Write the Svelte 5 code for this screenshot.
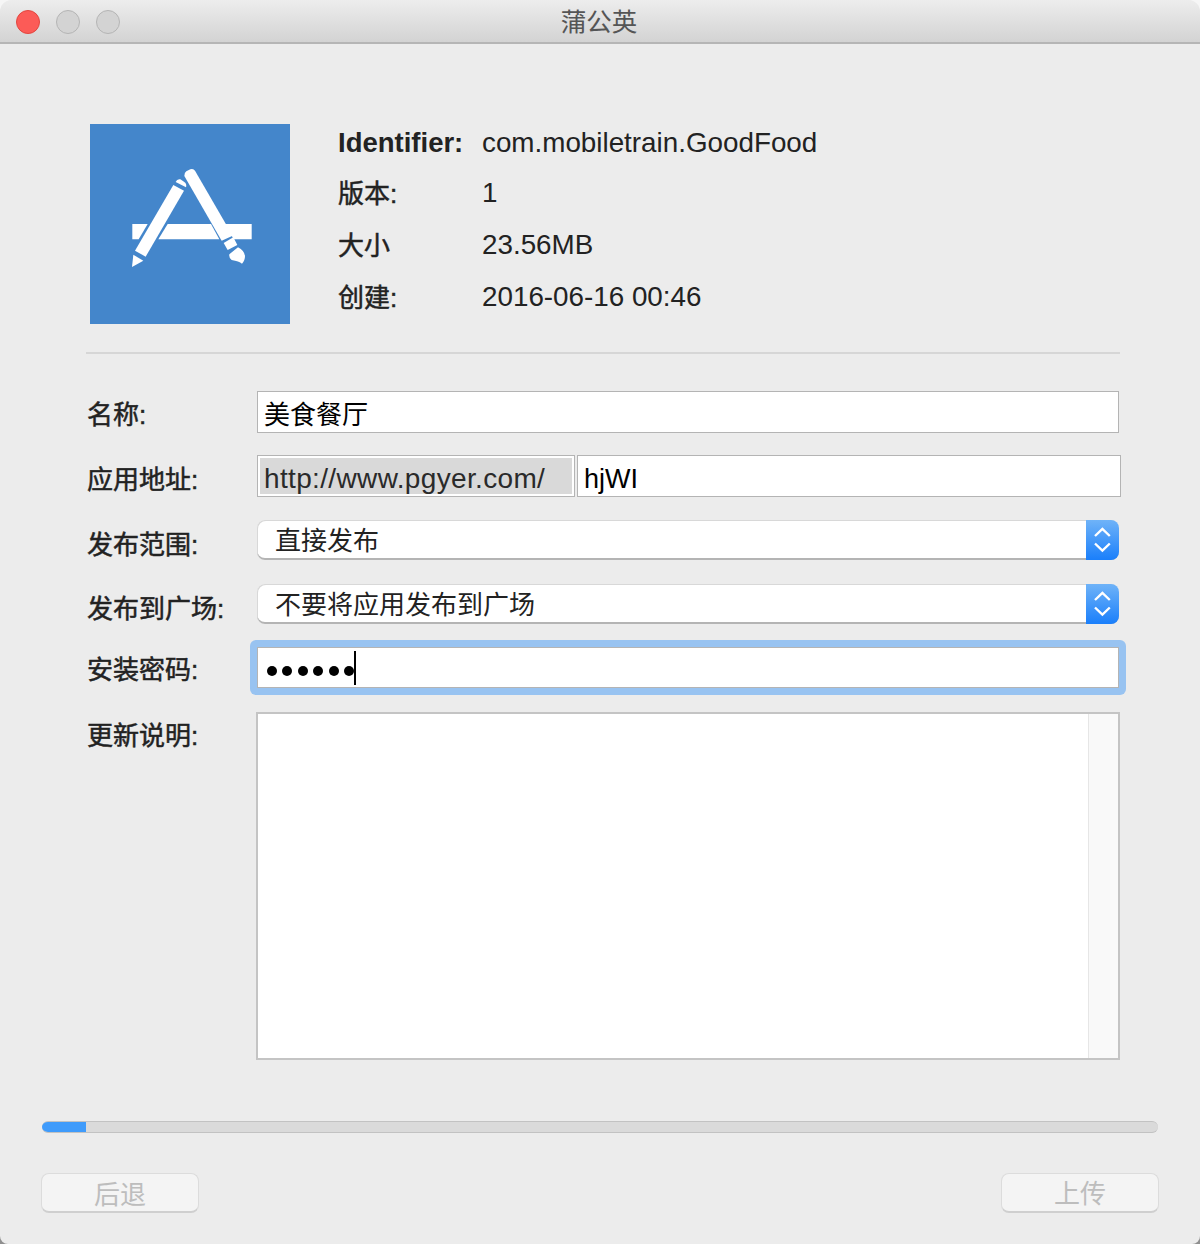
<script>
  const info = [
    { label: 'Identifier:', value: 'com.mobiletrain.GoodFood', latin: true },
    { label: '版本:', value: '1' },
    { label: '大小', value: '23.56MB' },
    { label: '创建:', value: '2016-06-16 00:46' }
  ];
  const dots = 6;
  const progress = 44;
</script>

<div class="window">
  <header class="titlebar">
    <div class="lights">
      <span class="light close"></span>
      <span class="light"></span>
      <span class="light"></span>
    </div>
    <span class="title">蒲公英</span>
  </header>

  <section class="summary">
    <svg class="app-icon" viewBox="15 12 600 600" width="200" height="200" aria-label="app icon">
      <rect x="15" y="12" width="600" height="600" fill="#4486cb" />
      <g fill="#fff">
        <!-- crossbar, cut by the pencil, runs into the brush -->
        <polygon points="142,312 188,312 161,358 142,358" />
        <polygon points="248,312 378,312 403,358 220,358" />
        <polygon points="420,312 500,312 500,358 446,358" />
        <!-- pencil -->
        <polygon points="265,195 297,212 182,410 150,392" />
        <path d="M272 186 Q276 176 286 178 L298 186 Q306 192 303 202 Z" />
        <polygon points="145,404 175,422 141,441" />
        <!-- brush -->
        <path d="M298 168 Q296 160 304 154 L316 148 Q325 145 330 152 L443 347 L410 362 Z" />
        <polygon points="416,369 445,352 457,375 428,390" />
        <path d="M433 403 L459 382 Q478 392 480 408 Q480 422 471 431 Q462 424 440 420 Q431 414 433 403 Z" />
      </g>
    </svg>
    <dl class="info">
      {#each info as row}
        <div class="info-row">
          <dt class:latin={row.latin}>{row.label}</dt>
          <dd>{row.value}</dd>
        </div>
      {/each}
    </dl>
  </section>

  <hr class="divider" />

  <form class="form">
    <div class="row name-row">
      <label for="name">名称:</label>
      <input id="name" class="field" value="美食餐厅" />
    </div>

    <div class="row url-row">
      <label for="slug">应用地址:</label>
      <div class="url">
        <span class="prefix-box"><span class="prefix">http://www.pgyer.com/</span></span>
        <input id="slug" class="field slug" value="hjWI" />
      </div>
    </div>

    <div class="row select-row range-row">
      <span class="label">发布范围:</span>
      <div class="select">
        <span class="select-text">直接发布</span>
        <span class="stepper">
          <svg viewBox="0 0 33 40" width="33" height="40">
            <path d="M9 16 L16.4 9 L23.8 16 M9 23.5 L16.4 30.5 L23.8 23.5" fill="none" stroke="#fff" stroke-width="2.4" />
          </svg>
        </span>
      </div>
    </div>

    <div class="row select-row plaza-row">
      <span class="label">发布到广场:</span>
      <div class="select">
        <span class="select-text">不要将应用发布到广场</span>
        <span class="stepper">
          <svg viewBox="0 0 33 40" width="33" height="40">
            <path d="M9 16 L16.4 9 L23.8 16 M9 23.5 L16.4 30.5 L23.8 23.5" fill="none" stroke="#fff" stroke-width="2.4" />
          </svg>
        </span>
      </div>
    </div>

    <div class="row password-row">
      <span class="label">安装密码:</span>
      <div class="focus-ring">
        <div class="password">
          {#each Array(dots) as _}
            <span class="dot"></span>
          {/each}
          <span class="caret"></span>
        </div>
      </div>
    </div>

    <div class="row notes-row">
      <label for="notes">更新说明:</label>
      <div class="notes">
        <textarea id="notes"></textarea>
        <div class="scrollbar"></div>
      </div>
    </div>
  </form>

  <div class="progress">
    <div class="progress-fill" style="width: {progress}px"></div>
  </div>

  <footer class="actions">
    <button class="back" disabled>后退</button>
    <button class="upload" disabled>上传</button>
  </footer>
</div>

<style>
  :global(body) {
    background: linear-gradient(#f6f6f6 50%, #8f8f8f 50%);
  }
  .window {
    width: 1200px;
    height: 1244px;
    box-sizing: border-box;
    background: #ececec;
    border-radius: 12px 12px 8px 8px;
    overflow: hidden;
    font-family: "Liberation Sans", "Noto Sans CJK SC", sans-serif;
    font-size: 27px;
    color: #222;
  }

  /* title bar */
  .titlebar {
    position: relative;
    height: 44px;
    box-sizing: border-box;
    display: flex;
    align-items: center;
    justify-content: center;
    background: linear-gradient(#ededed, #d3d3d3);
    border-bottom: 2px solid #b5b5b5;
  }
  .lights {
    position: absolute;
    left: 16px;
    top: 10px;
    display: flex;
    gap: 16px;
  }
  .light {
    width: 24px;
    height: 24px;
    box-sizing: border-box;
    border-radius: 50%;
    background: #d3d3d3;
    border: 1px solid #b4b4b4;
  }
  .light.close {
    background: #fc5b57;
    border-color: #e2463f;
  }
  .title {
    margin: 0 2px 3px 0;
    font-size: 25.5px;
    color: #555;
    font-family: "Noto Sans CJK SC", sans-serif;
  }

  /* app summary */
  .summary {
    display: flex;
    gap: 48px;
    margin: 80px 0 0 90px;
  }
  .app-icon {
    display: block;
    flex: none;
  }
  .info {
    margin: 0;
  }
  .info-row {
    display: flex;
    height: 38px;
    align-items: center;
    margin-bottom: 14px;
  }
  .info-row:first-child {
    margin-bottom: 12px;
  }
  .info-row:last-child {
    margin-bottom: 0;
  }
  dt {
    width: 144px;
    margin-bottom: 4px;
    font-size: 26px;
    -webkit-text-stroke: 0.5px #222;
  }
  dt.latin {
    margin-bottom: 0;
    font-size: 27.5px;
    font-weight: bold;
    -webkit-text-stroke: 0;
    white-space: nowrap;
  }
  dd {
    margin: 0;
    font-size: 27.8px;
  }
  .divider {
    width: 1034px;
    height: 2px;
    border: 0;
    margin: 28px 0 0 86px;
    background: #d6d6d6;
  }

  /* form */
  .form {
    margin: 0 0 0 87px;
  }
  .row {
    display: flex;
    align-items: center;
  }
  label,
  .label {
    width: 170px;
    flex: none;
    font-size: 26px;
    -webkit-text-stroke: 0.5px #222;
  }
  .field {
    display: block;
    box-sizing: border-box;
    height: 42px;
    padding: 0 6px;
    border: 1px solid #b4b4b4;
    border-radius: 0;
    background: #fff;
    outline: none;
    font: inherit;
    color: #000;
  }
  .name-row {
    margin-top: 37px;
  }
  .name-row .field {
    width: 862px;
    font-size: 26px;
  }
  .url-row {
    margin-top: 22px;
  }
  .url-row label {
    padding-top: 2px;
  }
  .url {
    display: flex;
    gap: 2px;
  }
  .prefix-box {
    width: 318px;
    height: 42px;
    box-sizing: border-box;
    padding: 2px;
    border: 1px solid #b4b4b4;
    background: #fff;
    display: flex;
  }
  .prefix {
    flex: 1;
    background: #d9d9d9;
    padding-left: 4px;
    font-size: 28px;
    letter-spacing: 0.35px;
    line-height: 41px;
    height: 36px;
    color: #2a2a2a;
    white-space: nowrap;
  }
  .slug {
    width: 544px;
    padding-top: 6px;
  }
  .select-row {
    height: 40px;
  }
  .select-row .label {
    padding-top: 4px;
  }
  .range-row {
    margin-top: 23px;
  }
  .plaza-row {
    margin-top: 24px;
  }
  .select {
    width: 862px;
    height: 40px;
    box-sizing: border-box;
    display: flex;
    justify-content: space-between;
    background: #fff;
    border-radius: 8px;
    overflow: hidden;
    box-shadow: inset 1px 1px 0 #d8d8d8, inset 0 -2px 0 #b4b4b4;
  }
  .select-text {
    padding-left: 18px;
    font-size: 26px;
    line-height: 42px;
    color: #222;
  }
  .stepper {
    width: 33px;
    height: 40px;
    background: linear-gradient(#6fb3f8, #1a7ffb);
  }
  .stepper svg {
    display: block;
  }
  .password-row {
    margin-top: 16px;
  }
  .password-row .label {
    width: 163px;
  }
  .focus-ring {
    width: 876px;
    height: 55px;
    box-sizing: border-box;
    padding: 7px;
    border-radius: 6px;
    background: #98c3f1;
  }
  .password {
    height: 41px;
    box-sizing: border-box;
    display: flex;
    align-items: center;
    padding: 6px 0 0 9px;
    gap: 5.4px;
    background: #fff;
    border: 1px solid #b4b4b4;
  }
  .dot {
    width: 10px;
    height: 10px;
    border-radius: 50%;
    background: #000;
  }
  .caret {
    width: 2px;
    height: 34px;
    margin: -6px 0 0 -5px;
    background: #000;
  }
  .notes-row {
    margin-top: 17px;
    align-items: flex-start;
  }
  .notes-row label {
    width: 169px;
    margin-top: 3px;
  }
  .notes {
    width: 864px;
    height: 348px;
    box-sizing: border-box;
    display: flex;
    border: 2px solid #c4c4c4;
    background: #fff;
  }
  textarea {
    flex: 1;
    border: 0;
    padding: 0;
    outline: none;
    resize: none;
    background: #fff;
  }
  .scrollbar {
    width: 29px;
    background: #f9f9f9;
    border-left: 1px solid #e6e6e6;
  }

  /* progress + buttons */
  .progress {
    width: 1116px;
    height: 12px;
    box-sizing: border-box;
    margin: 61px 0 0 42px;
    background: #dadada;
    border-top: 1px solid #c2c2c2;
    border-bottom: 1px solid #c2c2c2;
    border-radius: 6px;
    overflow: hidden;
  }
  .progress-fill {
    height: 12px;
    margin-top: -1px;
    background: #3f9bfb;
  }
  .actions {
    display: flex;
    justify-content: space-between;
    margin: 40px 41px 0;
  }
  button {
    width: 158px;
    height: 40px;
    padding: 0;
    background: #f4f4f4;
    border: 1px solid #dcdcdc;
    border-bottom: 2px solid #cfcfcf;
    border-radius: 8px;
    color: #bdbdbd;
    font-family: "Noto Sans CJK SC", sans-serif;
    font-size: 26px;
    line-height: 36px;
  }
  .upload {
    padding-bottom: 4px;
  }
</style>
